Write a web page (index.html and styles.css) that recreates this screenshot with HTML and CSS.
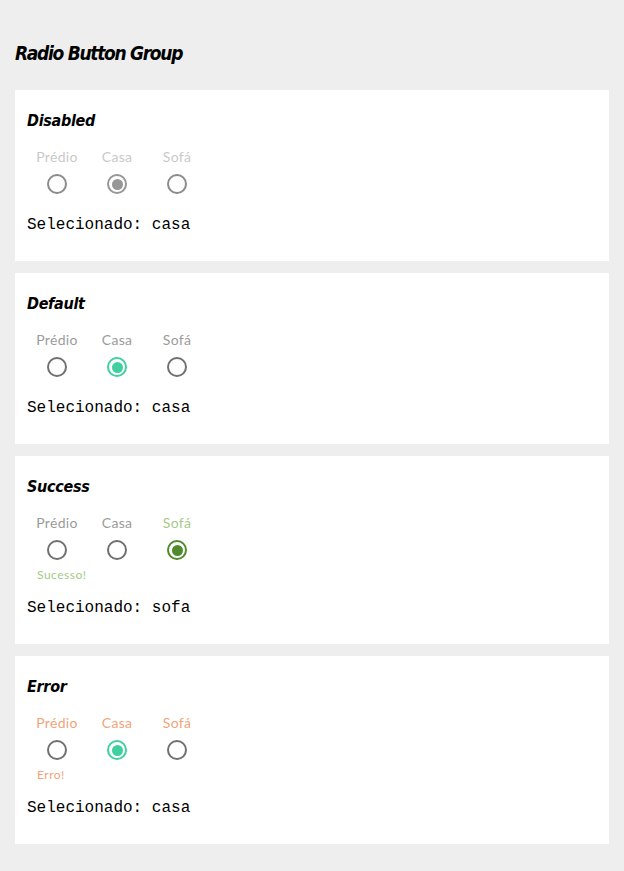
FILE: index.html
```html
<!DOCTYPE html>
<html lang="pt">
<head>
<meta charset="utf-8">
<link rel="stylesheet" href="styles.css">
</head>
<body>
<h1 class="page-title">Radio Button Group</h1>

<section class="card">
  <h2 class="card-title">Disabled</h2>
  <div class="group disabled">
    <div class="item"><span class="label">Prédio</span><span class="radio"></span></div>
    <div class="item"><span class="label">Casa</span><span class="radio checked"></span></div>
    <div class="item"><span class="label">Sofá</span><span class="radio"></span></div>
  </div>
  <p class="selected">Selecionado: casa</p>
</section>

<section class="card">
  <h2 class="card-title">Default</h2>
  <div class="group default">
    <div class="item"><span class="label">Prédio</span><span class="radio"></span></div>
    <div class="item"><span class="label">Casa</span><span class="radio checked"></span></div>
    <div class="item"><span class="label">Sofá</span><span class="radio"></span></div>
  </div>
  <p class="selected">Selecionado: casa</p>
</section>

<section class="card">
  <h2 class="card-title">Success</h2>
  <div class="group success">
    <div class="item"><span class="label">Prédio</span><span class="radio"></span></div>
    <div class="item"><span class="label">Casa</span><span class="radio"></span></div>
    <div class="item"><span class="label active">Sofá</span><span class="radio checked"></span></div>
  </div>
  <div class="helper success-text">Sucesso!</div>
  <p class="selected">Selecionado: sofa</p>
</section>

<section class="card">
  <h2 class="card-title">Error</h2>
  <div class="group error">
    <div class="item"><span class="label">Prédio</span><span class="radio"></span></div>
    <div class="item"><span class="label">Casa</span><span class="radio checked"></span></div>
    <div class="item"><span class="label">Sofá</span><span class="radio"></span></div>
  </div>
  <div class="helper error-text">Erro!</div>
  <p class="selected">Selecionado: casa</p>
</section>
</body>
</html>
```
FILE: styles.css
```css
* { box-sizing: border-box; }
html, body { margin: 0; padding: 0; }
body {
  background: #eeeeee;
  padding: 40px 15px 27px 15px;
  font-family: "DejaVu Sans", sans-serif;
}
.page-title {
  margin: 0 0 23px 0;
  font-family: "DejaVu Sans Condensed", "DejaVu Sans", sans-serif;
  font-weight: bold;
  font-style: italic;
  font-size: 19px;
  line-height: 27px;
  color: #000;
  letter-spacing: -1.3px;
}
.card {
  background: #fff;
  padding: 19px 12px 26px 12px;
  margin-bottom: 12px;
}
.card-title {
  margin: 0 0 16px 0;
  font-family: "DejaVu Sans Condensed", "DejaVu Sans", sans-serif;
  font-weight: bold;
  font-style: italic;
  font-size: 16px;
  line-height: 24px;
  color: #000;
  letter-spacing: -0.3px;
}
.group {
  display: flex;
}
.item {
  width: 60px;
  display: flex;
  flex-direction: column;
  align-items: center;
}
.label {
  font-family: "Lato", "Noto Sans", sans-serif;
  font-weight: 400;
  font-size: 14px;
  line-height: 16px;
  letter-spacing: 0.3px;
  color: #9b9b9b;
  margin-bottom: 9px;
}
.radio {
  width: 20px;
  height: 20px;
  border-radius: 50%;
  border: 2px solid #707070;
  background: #fff;
  display: flex;
  align-items: center;
  justify-content: center;
}
.radio.checked::after {
  content: "";
  width: 11px;
  height: 11px;
  border-radius: 50%;
  background: currentColor;
}
.disabled .label { color: #c9c9c9; }
.disabled .radio { border-color: #8a8a8a; }
.disabled .radio.checked { border-color: #979797; color: #979797; }
.default .radio.checked, .error .radio.checked { border-color: #40d0a0; color: #40d0a0; }
.success .radio.checked { border-color: #4f8a2c; color: #4f8a2c; }
.success .label.active { color: #a6c98a; }
.error .label { color: #f0a47a; }
.helper {
  font-family: "Lato", "Noto Sans", sans-serif;
  font-weight: 400;
  font-size: 12px;
  line-height: 13px;
  letter-spacing: 0.5px;
  padding-left: 10px;
  margin-top: 8px;
  margin-bottom: -4px;
}
.success-text { color: #a6c98a; }
.error-text { color: #f0a47a; }
.selected {
  margin: 22px 0 0 0;
  font-family: "Liberation Mono", monospace;
  font-size: 16px;
  line-height: 19px;
  color: #000;
}
```
